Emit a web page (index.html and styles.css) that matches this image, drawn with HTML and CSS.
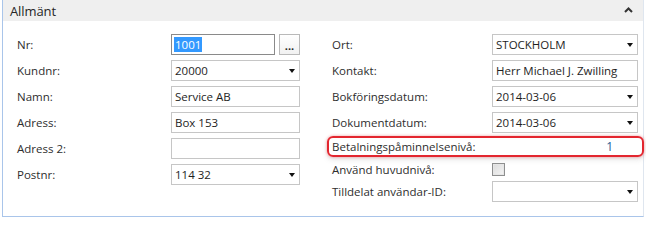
FILE: index.html
```html
<!DOCTYPE html>
<html lang="sv">
<head>
<meta charset="utf-8">
<title>Allmänt</title>
<link rel="stylesheet" href="styles.css">
</head>
<body>
<section class="panel">
  <header class="panel-head">
    <span class="panel-title">Allmänt</span>
    <svg class="chevron" width="9" height="6" viewBox="0 0 9 6"><path d="M1 5 L4.5 1.5 L8 5" fill="none" stroke="#333" stroke-width="2"/></svg>
  </header>
  <div class="panel-body">
    <div class="col col-left">
      <div class="row">
        <label class="lbl">Nr:</label>
        <div class="ctl ctl-lookup">
          <div class="box box-focus"><span class="sel">1001</span></div>
          <button class="dots">...</button>
        </div>
      </div>
      <div class="row">
        <label class="lbl">Kundnr:</label>
        <div class="ctl box box-drop">20000<i class="arrow"></i></div>
      </div>
      <div class="row">
        <label class="lbl">Namn:</label>
        <div class="ctl box">Service AB</div>
      </div>
      <div class="row">
        <label class="lbl">Adress:</label>
        <div class="ctl box">Box 153</div>
      </div>
      <div class="row">
        <label class="lbl">Adress 2:</label>
        <div class="ctl box"></div>
      </div>
      <div class="row">
        <label class="lbl">Postnr:</label>
        <div class="ctl box box-drop">114 32<i class="arrow"></i></div>
      </div>
    </div>
    <div class="col col-right">
      <div class="row">
        <label class="lbl">Ort:</label>
        <div class="ctl box box-drop">STOCKHOLM<i class="arrow"></i></div>
      </div>
      <div class="row">
        <label class="lbl">Kontakt:</label>
        <div class="ctl box">Herr Michael J. Zwilling</div>
      </div>
      <div class="row">
        <label class="lbl">Bokföringsdatum:</label>
        <div class="ctl box box-drop">2014-03-06<i class="arrow"></i></div>
      </div>
      <div class="row">
        <label class="lbl">Dokumentdatum:</label>
        <div class="ctl box box-drop">2014-03-06<i class="arrow"></i></div>
      </div>
      <div class="row row-hl">
        <label class="lbl">Betalningspåminnelsenivå:</label>
        <div class="ctl val">1</div>
      </div>
      <div class="row row-check">
        <label class="lbl">Använd huvudnivå:</label>
        <div class="ctl"><span class="check"></span></div>
      </div>
      <div class="row row-last">
        <label class="lbl">Tilldelat användar-ID:</label>
        <div class="ctl box box-drop"><i class="arrow"></i></div>
      </div>
    </div>
  </div>
</section>
</body>
</html>
```

FILE: styles.css
```css
html, body {
  margin: 0;
  padding: 0;
  background: #ffffff;
}
body {
  font-family: "Open Sans", "Noto Sans", "Liberation Sans", sans-serif;
  font-size: 11.5px;
  color: #2b2b2b;
}
.panel {
  margin-left: 2px;
  width: 640px;
  height: 216px;
  border-left: 1px solid #a9c5ea;
  border-bottom: 1px solid #a9c5ea;
  border-right: 1px solid #dfe6ef;
  background: #fff;
}
.panel-head {
  height: 21px;
  background: #efefef;
  display: flex;
  align-items: center;
  justify-content: space-between;
  padding: 0 10px 0 7px;
}
.panel-title {
  font-size: 13px;
  color: #262626;
  letter-spacing: -0.1px;
}
.chevron { display: block; margin-top: -1px; }
.panel-body {
  display: flex;
  padding: 13px 0 0 13px;
}
.col {
  display: flex;
  flex-direction: column;
  gap: 5px;
}
.col-left { width: 315px; }
.col-left .lbl { width: 154px; }
.col-left .ctl { width: 129px; }
.col-right .lbl { width: 160px; }
.col-right .ctl { width: 146px; }
.row {
  display: flex;
  align-items: center;
  height: 21px;
}
.lbl {
  padding-left: 1px;
  white-space: nowrap;
  color: #2e2e2e;
}
.box {
  box-sizing: border-box;
  height: 21px;
  border: 1px solid #c6c6c6;
  background: #fff;
  padding: 0 3px;
  display: flex;
  align-items: center;
  color: #1e1e1e;
  position: relative;
  white-space: nowrap;
}
.box-drop { justify-content: space-between; }
.arrow {
  width: 0;
  height: 0;
  border-left: 3.5px solid transparent;
  border-right: 3.5px solid transparent;
  border-top: 4px solid #111;
  margin-left: auto;
  margin-right: 1px;
}
.ctl-lookup {
  display: flex;
  gap: 4px;
  height: 21px;
}
.ctl-lookup .box { flex: 1; }
.box-focus { border-color: #8a8a8a; padding-left: 2px; }
.sel {
  background: #3399ff;
  color: #fff;
  padding: 0 1px;
  line-height: 15px;
}
.dots {
  width: 21px;
  height: 21px;
  box-sizing: border-box;
  border: 1px solid #b9b9b9;
  background: linear-gradient(#ffffff, #f1f1f1);
  padding: 0 0 3px;
  font: bold 11px "Open Sans", sans-serif;
  color: #222;
  display: flex;
  align-items: flex-end;
  justify-content: center;
  line-height: 1;
}
.row-hl {
  box-sizing: border-box;
  margin: -2px -6px 0 -4px;
  padding: 0 4px 0 2px;
  height: 21px;
  border: 2px solid #e3262f;
  border-radius: 6px;
  box-shadow: 0 0 3px rgba(227, 38, 47, 0.45), 0 3px 5px rgba(120, 120, 120, 0.18);
}
.val {
  text-align: right;
  padding-right: 25px;
  box-sizing: border-box;
  color: #2a5f96;
  font-size: 12px;
}
.row-check { height: 17px; margin-top: -1px; }
.row-last { margin-top: -2px; }
.check {
  display: block;
  width: 13px;
  height: 13px;
  box-sizing: border-box;
  border: 1px solid #8e8f8f;
  background: linear-gradient(135deg, #dcdcdc, #f4f4f4);
  box-shadow: inset 0 0 0 1px #e6e6e6;
}
```
